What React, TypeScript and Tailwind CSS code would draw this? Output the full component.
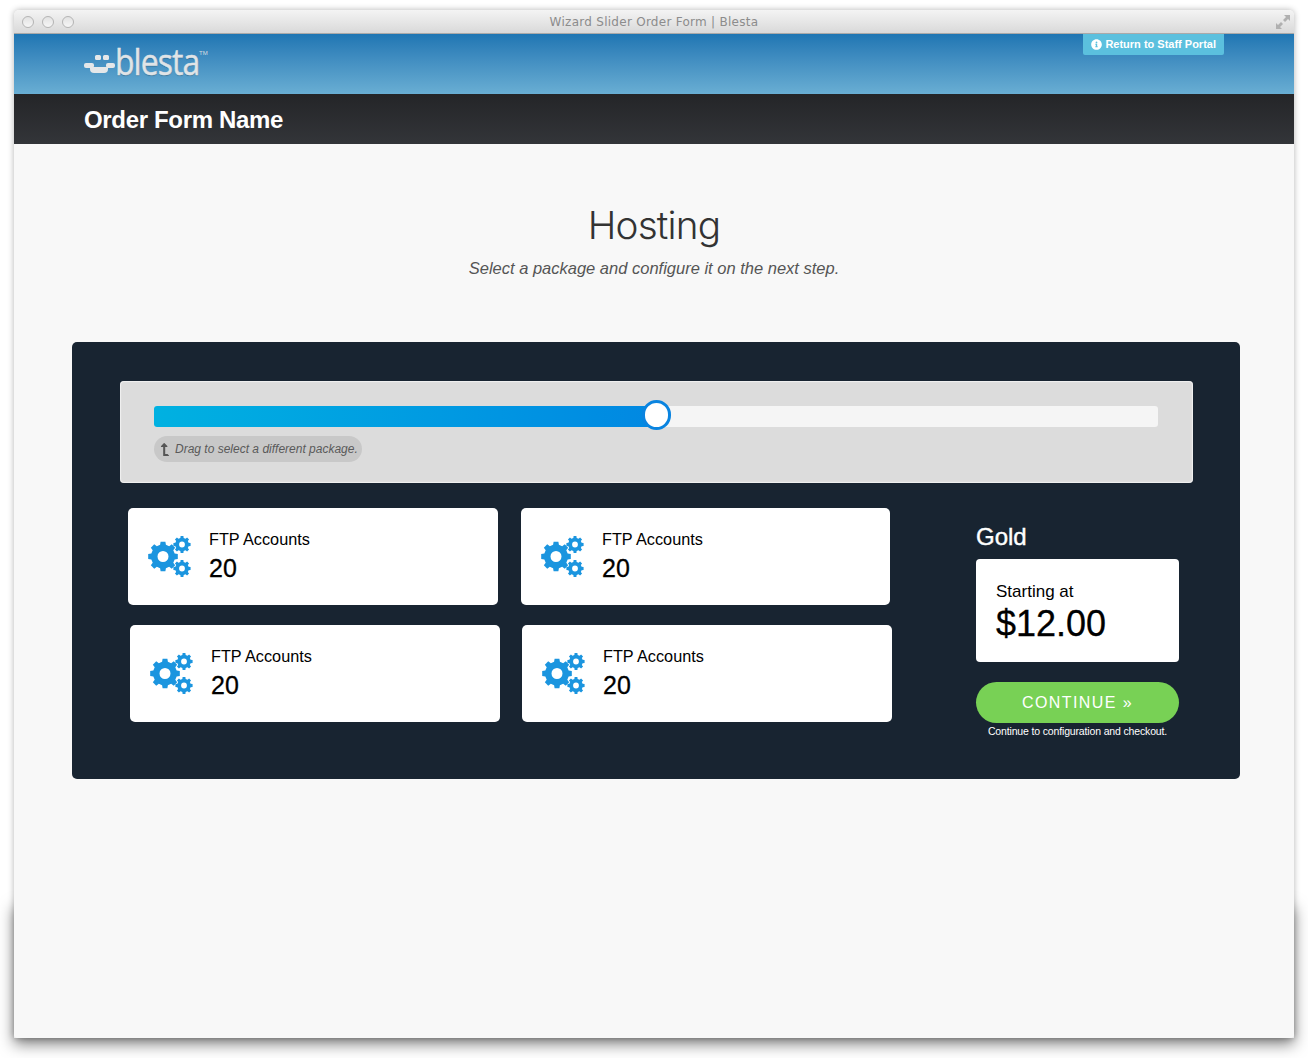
import { FaInfoCircle, FaLevelUpAlt } from "react-icons/fa";

const sans = "font-['Liberation_Sans',Arial,sans-serif]";

function TrafficDot() {
  return <span className="h-3 w-3 rounded-full border border-[#b4b4b4] bg-gradient-to-b from-[#e2e2e2] to-[#f6f6f6]" />;
}

function Logo() {
  return (
    <div className="relative flex h-[60px] w-[130px] items-start">
      <svg width="31" height="24" viewBox="0 0 31 24" className="mt-[21px] shrink-0">
        <g fill="#e4e7e9">
          <rect x="11" y="3" width="6" height="5" rx="1.5" />
          <rect x="19" y="3" width="6" height="5" rx="1.5" />
          <rect x="0" y="11" width="10" height="5" rx="2" />
          <rect x="22" y="11" width="9" height="5" rx="2" />
          <path d="M6 15 h18 v2 q0 4 -4 4 h-10 q-4 0 -4 -4z" />
        </g>
      </svg>
      <span className="mt-[5px] origin-left scale-x-[0.86] font-['Open_Sans',sans-serif] text-[37px] leading-[50px] tracking-[-1px] text-[#e0e4e7] [-webkit-text-stroke:0.5px_#e0e4e7] [text-shadow:0_1px_1px_rgba(0,0,0,0.25)]">
        blesta
      </span>
      <span className="absolute top-[19px] left-[115px] text-[6px] leading-none text-[#d7dce0]">TM</span>
    </div>
  );
}

function gearPath(cx: number, cy: number, outer: number, root: number, hole: number, teeth: number) {
  const step = (Math.PI * 2) / teeth;
  const pts: string[] = [];
  for (let i = 0; i < teeth; i++) {
    const a = i * step - Math.PI / 2;
    const w = step * 0.24;
    const corners: [number, number][] = [
      [root, a - w * 1.3],
      [outer, a - w * 0.85],
      [outer, a + w * 0.85],
      [root, a + w * 1.3],
    ];
    corners.forEach(([r, t]) => pts.push(`${(cx + r * Math.cos(t)).toFixed(2)} ${(cy + r * Math.sin(t)).toFixed(2)}`));
  }
  const ring = `M${cx - hole} ${cy}a${hole} ${hole} 0 1 0 ${hole * 2} 0a${hole} ${hole} 0 1 0 ${-hole * 2} 0z`;
  return `M${pts.join("L")}Z${ring}`;
}

function Cogs() {
  return (
    <svg width="44" height="42" viewBox="0 0 44 42" className="shrink-0" fill="#1b95df" fillRule="evenodd">
      <path d={gearPath(15, 20.5, 15, 12, 5.5, 8)} />
      <path d={gearPath(34, 8.5, 8.7, 6.8, 2.9, 8)} />
      <path d={gearPath(34, 32.5, 8.7, 6.8, 2.9, 8)} />
    </svg>
  );
}

function FeatureCard({ className }: { className: string }) {
  return (
    <div className={`flex h-[97px] items-center rounded-[5px] bg-white pl-5 ${className}`}>
      <Cogs />
      <div className="mt-[-1px] ml-[17px] text-black">
        <div className="text-[16.25px] leading-5">FTP Accounts</div>
        <div className="mt-[3px] text-[25px] leading-8 [-webkit-text-stroke:0.3px_#000]">20</div>
      </div>
    </div>
  );
}

export default function App() {
  return (
    <div className={`relative h-[1058px] w-[1308px] overflow-hidden bg-white pt-[10px] pl-[14px] ${sans}`}>
      {/* heavier shadow of the window, only on the lower part */}
      <div className="absolute top-[902px] left-[14px] h-[136px] w-[1280px] shadow-[0_6px_14px_rgba(0,0,0,0.5)]" />
      <div className="relative flex h-[1028px] w-[1280px] flex-col overflow-hidden rounded-t-[5px] rounded-b-[3px] bg-[#f8f8f8] shadow-[0_0_6px_rgba(0,0,0,0.3)]">
        <div className="relative flex h-6 shrink-0 items-center justify-center border-b border-[#a9a9a9] bg-gradient-to-b from-[#f4f4f4] to-[#d9d9d9]">
          <div className="absolute left-2 flex gap-2">
            <TrafficDot />
            <TrafficDot />
            <TrafficDot />
          </div>
          <span className="font-['DejaVu_Sans',sans-serif] text-[12px] tracking-[0.27px] text-[#8c8c8c]">
            Wizard Slider Order Form | Blesta
          </span>
          <svg width="16" height="16" viewBox="0 0 16 16" className="absolute right-[3px]" fill="#b0b0b0">
            <path d="M9 1 h6 v6 l-2-2 -3 3 -2-2 3-3z" />
            <path d="M1 9 v6 h6 l-2-2 3-3 -2-2 -3 3z" />
          </svg>
        </div>

        <div className="relative flex h-[60px] shrink-0 items-start bg-gradient-to-b from-[#1f76b3] to-[#69aed3] pl-[70px]">
          <div className="mt-[-3px]">
            <Logo />
          </div>
          <a className="absolute top-0 right-[70px] flex h-[21px] items-center gap-[3px] rounded-b-[2px] bg-[#5bc0de] pr-2 pl-2 text-[11px] font-bold text-white">
            <FaInfoCircle className="h-[11px] w-[11px]" />
            Return to Staff Portal
          </a>
        </div>

        <div className="flex h-[50px] shrink-0 items-center bg-gradient-to-b from-[#242528] to-[#333539] pl-[70px]">
          <h2 className="mt-[1px] text-[24px] font-bold tracking-[-0.33px] text-white">Order Form Name</h2>
        </div>

        <div className="pt-[54px] text-center">
          <h1 className="font-['Inter',sans-serif] text-[38.7px] leading-[54px] font-light tracking-[-0.8px] text-[#333]">Hosting</h1>
          <p className="mt-[4px] text-[16.5px] leading-6 text-[#555] italic">Select a package and configure it on the next step.</p>
        </div>

        <div className="mt-[62px] ml-[58px] h-[437px] w-[1168px] rounded-[5px] bg-[#182431] pt-[39px] pl-[48px]">
          <div className="h-[102px] w-[1073px] rounded-[4px] bg-[#dcdcdc] pt-[25px] pl-[34px] shadow-[inset_0_0_1px_1px_rgba(255,255,255,0.6)]">
            <div className="relative h-[21px] w-[1004px] rounded-[3px] bg-[#f5f5f5]">
              <div className="h-full w-[502px] rounded-l-[3px] bg-gradient-to-r from-[#00b1e1] to-[#0288e2]" />
              <div className="absolute top-[-6px] left-[488px] h-[30px] w-[29px] rounded-full border-[3px] border-[#0a84e0] bg-white" />
            </div>
            <div className="mt-[9px] flex h-[26px] w-[208px] items-center rounded-full bg-[#c8c8c8] pl-[5px] text-[12px] text-[#5a5a5a] italic">
              <FaLevelUpAlt className="mr-[4px] h-[13px] w-[12px] -scale-x-100 text-[#555]" />
              Drag to select a different package.
            </div>
          </div>

          <div className="flex">
            <div className="pt-[25px] pl-[8px]">
              <div className="flex gap-[23px]">
                <FeatureCard className="w-[370px]" />
                <FeatureCard className="w-[369px]" />
              </div>
              <div className="mt-[20px] ml-[2px] flex gap-[22px]">
                <FeatureCard className="w-[370px]" />
                <FeatureCard className="w-[370px]" />
              </div>
            </div>
            <div className="ml-[84px] w-[203px] pt-[39px]">
              <h3 className="text-[24px] leading-[30px] font-normal text-white [-webkit-text-stroke:0.4px_#fff]">Gold</h3>
              <div className="mt-[7px] flex h-[103px] flex-col justify-center rounded-[4px] bg-white pl-5 text-black">
                <div className="mt-[5px] text-[17px] leading-5">Starting at</div>
                <div className="mt-[1px] text-[36px] leading-[42px] [-webkit-text-stroke:0.3px_#000]">$12.00</div>
              </div>
              <button className="mt-[20px] flex h-[41px] w-full items-center justify-center rounded-full bg-[#78d155] text-[16px] tracking-[1.4px] text-white">
                CONTINUE »
              </button>
              <p className="mt-[1px] text-center text-[10.5px] leading-[14px] tracking-[-0.15px] whitespace-nowrap text-white">
                Continue to configuration and checkout.
              </p>
            </div>
          </div>
        </div>
      </div>
    </div>
  );
}
